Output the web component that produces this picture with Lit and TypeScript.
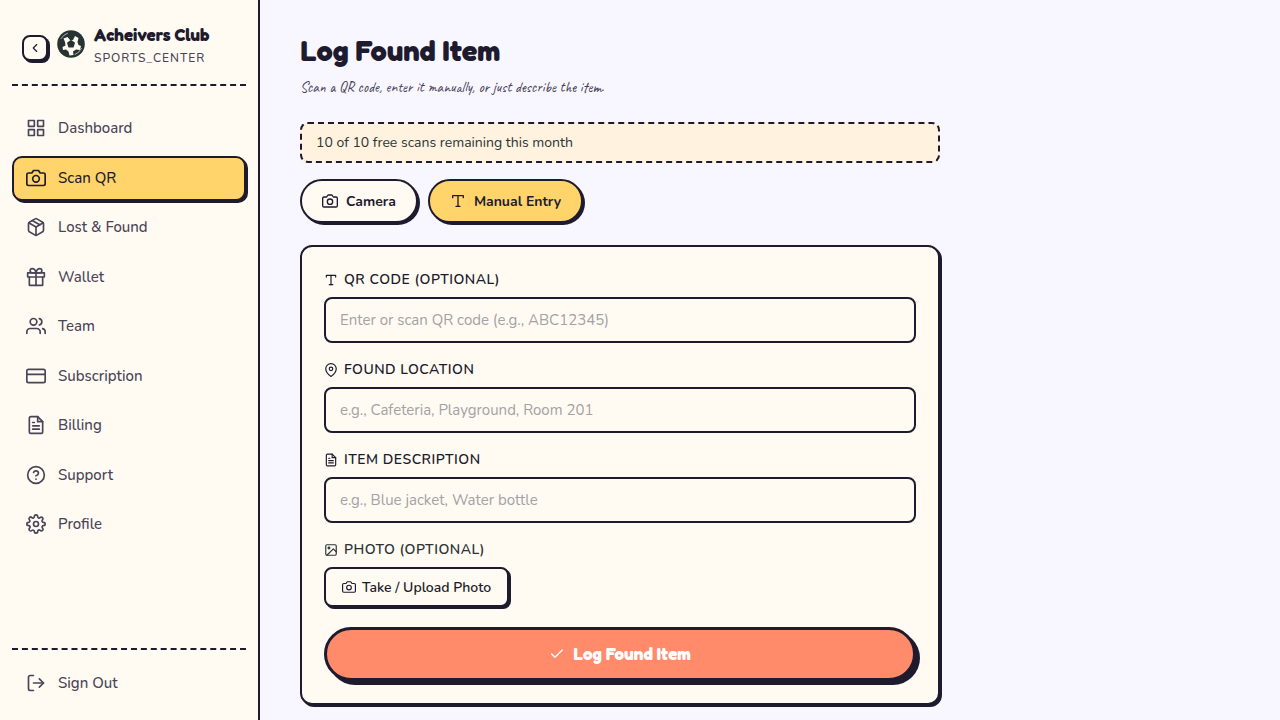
import { LitElement, html, css, svg } from "lit";
import { customElement, property, state } from "lit/decorators.js";
import { classMap } from "lit/directives/class-map.js";

const ICONS: Record<string, unknown> = {
  chevron: svg`<path d="m15 18-6-6 6-6"/>`,
  grid: svg`<rect width="7" height="7" x="3" y="3"/><rect width="7" height="7" x="14" y="3"/><rect width="7" height="7" x="14" y="14"/><rect width="7" height="7" x="3" y="14"/>`,
  camera: svg`<path d="M23 19a2 2 0 0 1-2 2H3a2 2 0 0 1-2-2V8a2 2 0 0 1 2-2h4l2-3h6l2 3h4a2 2 0 0 1 2 2z"/><circle cx="12" cy="13" r="4"/>`,
  box: svg`<path d="m16.500 9.400-9-5.190"/><path d="M21 16V8a2 2 0 0 0-1-1.730l-7-4a2 2 0 0 0-2 0l-7 4A2 2 0 0 0 3 8v8a2 2 0 0 0 1 1.730l7 4a2 2 0 0 0 2 0l7-4A2 2 0 0 0 21 16z"/><path d="M3.270 6.960 12 12.010l8.730-5.050"/><path d="M12 22.080V12"/>`,
  gift: svg`<path d="M20 12v10H4V12"/><rect x="2" y="7" width="20" height="5"/><path d="M12 22V7"/><path d="M12 7H7.500a2.500 2.500 0 0 1 0-5C11 2 12 7 12 7z"/><path d="M12 7h4.500a2.500 2.500 0 0 0 0-5C13 2 12 7 12 7z"/>`,
  users: svg`<path d="M17 21v-2a4 4 0 0 0-4-4H5a4 4 0 0 0-4 4v2"/><circle cx="9" cy="7" r="4"/><path d="M23 21v-2a4 4 0 0 0-3-3.870"/><path d="M16 3.130a4 4 0 0 1 0 7.750"/>`,
  card: svg`<rect width="22" height="16" x="1" y="4" rx="2"/><path d="M1 10h22"/>`,
  file: svg`<path d="M14 2H6a2 2 0 0 0-2 2v16a2 2 0 0 0 2 2h12a2 2 0 0 0 2-2V8z"/><path d="M14 2v6h6"/><path d="M10 9H8"/><path d="M16 13H8"/><path d="M16 17H8"/>`,
  help: svg`<circle cx="12" cy="12" r="10"/><path d="M9.090 9a3 3 0 0 1 5.830 1c0 2-3 3-3 3"/><path d="M12 17h.010"/>`,
  gear: svg`<circle cx="12" cy="12" r="3"/><path d="M19.400 15a1.650 1.650 0 0 0 .330 1.820l.060.060a2 2 0 1 1-2.830 2.830l-.060-.060a1.650 1.650 0 0 0-2.820 1.180V21a2 2 0 0 1-4 0v-.090A1.650 1.650 0 0 0 9 19.400a1.650 1.650 0 0 0-1.820.330l-.060.060a2 2 0 1 1-2.830-2.830l.060-.060A1.650 1.650 0 0 0 3.170 14H3a2 2 0 0 1 0-4h.090A1.650 1.650 0 0 0 4.600 9a1.650 1.650 0 0 0-.330-1.820l-.060-.060a2 2 0 1 1 2.830-2.830l.060.060A1.650 1.650 0 0 0 10 3.170V3a2 2 0 0 1 4 0v.090a1.650 1.650 0 0 0 2.820 1.250l.060-.060a2 2 0 1 1 2.830 2.830l-.060.060A1.650 1.650 0 0 0 20.910 10H21a2 2 0 0 1 0 4h-.090a1.650 1.650 0 0 0-1.510 1z"/>`,
  exit: svg`<path d="M9 21H5a2 2 0 0 1-2-2V5a2 2 0 0 1 2-2h4"/><path d="m16 17 5-5-5-5"/><path d="M21 12H9"/>`,
  type: svg`<path d="M4 7V4h16v3"/><path d="M9 20h6"/><path d="M12 4v16"/>`,
  pin: svg`<path d="M21 10c0 7-9 13-9 13s-9-6-9-13a9 9 0 0 1 18 0z"/><circle cx="12" cy="10" r="3"/>`,
  image: svg`<rect width="18" height="18" x="3" y="3" rx="2"/><circle cx="8.500" cy="8.500" r="1.500"/><path d="m21 15-5-5L5 21"/>`,
  check: svg`<path d="M20 6 9 17l-5-5"/>`,
};

@customElement("ui-icon")
export class UiIcon extends LitElement {
  @property() name = "";
  static styles = css`
    :host { display: inline-flex; flex: none; width: 20px; height: 20px; }
    svg { width: 100%; height: 100%; overflow: visible; fill: none; stroke: currentColor; stroke-width: 2; stroke-linecap: round; stroke-linejoin: round; }
  `;
  render() {
    return html`<svg viewBox="0 0 24 24" aria-hidden="true">${ICONS[this.name]}</svg>`;
  }
}

const NAV = [
  ["grid", "Dashboard"],
  ["camera", "Scan QR"],
  ["box", "Lost & Found"],
  ["gift", "Wallet"],
  ["users", "Team"],
  ["card", "Subscription"],
  ["file", "Billing"],
  ["help", "Support"],
  ["gear", "Profile"],
];

const FIELDS = [
  { id: "code", icon: "type", label: "QR Code (Optional)", hint: "Enter or scan QR code (e.g., ABC12345)" },
  { id: "location", icon: "pin", label: "Found Location", hint: "e.g., Cafeteria, Playground, Room 201" },
  { id: "description", icon: "file", label: "Item Description", hint: "e.g., Blue jacket, Water bottle" },
];

@customElement("app-root")
export class AppRoot extends LitElement {
  @state() mode = "manual";

  static styles = css`
    :host {
      --ink: #1e1b2e;
      --muted: #4a4458;
      --cream: #fffbf2;
      --sun: #ffd56b;
      display: grid;
      grid-template-columns: 260px minmax(0, 1fr);
      min-height: 100vh;
      background: #f8f7ff;
      color: var(--ink);
      font: 400 15px/1.5 Nunito, "Open Sans", sans-serif;
    }
    * { box-sizing: border-box; }
    button, input { font: inherit; color: inherit; margin: 0; }
    button { cursor: pointer; }
    .side {
      display: flex;
      flex-direction: column;
      padding: 23px 12px 14px;
      background: var(--cream);
      border-right: 2px solid var(--ink);
    }
    .brand {
      display: flex;
      align-items: flex-start;
      gap: 9px;
      padding: 0 10px 15px;
      border-bottom: 2px dashed var(--ink);
    }
    .collapse {
      display: grid;
      place-items: center;
      width: 26px;
      height: 26px;
      margin-top: 12px;
      padding: 0;
      background: var(--cream);
      border: 2px solid var(--ink);
      border-radius: 8px;
      box-shadow: 2px 2px 0 var(--ink);
    }
    .collapse ui-icon { width: 14px; height: 14px; }
    .ball { width: 28px; height: 28px; margin-top: 7px; flex: none; }
    .names { min-width: 0; }
    .club {
      font: 700 17px/24px "Fredoka One", Fredoka, Lato, sans-serif;
      white-space: nowrap;
    }
    .kind { font-size: 12px; line-height: 22px; letter-spacing: 1px; font-weight: 500; color: var(--muted); }
    .nav { display: flex; flex-direction: column; gap: 4px; margin-top: 20px; flex: 1; }
    .link {
      display: flex;
      align-items: center;
      gap: 12px;
      padding: 9px 12px 10px;
      border: 2px solid transparent;
      border-radius: 10px;
      color: var(--muted);
      font-size: 15px;
      line-height: 1.5;
      font-weight: 500;
      text-decoration: none;
    }
    .link.active { background: var(--sun); border-color: var(--ink); box-shadow: 2px 2px 0 var(--ink); color: var(--ink); }
    .foot { border-top: 2px dashed var(--ink); padding-top: 11px; display: grid; }
    .signout { background: none; text-align: left; }
    .main { padding: 32px 40px 14px; }
    .col { max-width: 640px; }
    h1 { margin: 0; font: 700 29px/38px "Fredoka One", Fredoka, Lato, sans-serif; }
    .lead { margin: 6px 0 0; font: 500 15px/24px Caveat, "Liberation Serif", cursive; color: var(--muted); }
    .quota {
      margin: 22px 0 16px;
      padding: 8px 14px;
      border: 2px dashed var(--ink);
      border-radius: 8px;
      background: #fff3df;
      font-size: 14px;
      line-height: 21px;
      color: #2d3436;
    }
    .tabs { display: flex; gap: 10px; margin-bottom: 22px; }
    .tab {
      display: flex;
      align-items: center;
      gap: 8px;
      height: 44px;
      padding: 0 20px;
      border: 2px solid var(--ink);
      border-radius: 22px;
      background: var(--cream);
      box-shadow: 2px 2px 0 var(--ink);
      font-size: 14px;
      font-weight: 700;
    }
    .tab.on { background: var(--sun); }
    .tab ui-icon { width: 16px; height: 16px; }
    .card {
      display: flex;
      flex-direction: column;
      gap: 16px;
      padding: 22px;
      border: 2px solid var(--ink);
      border-radius: 12px;
      background: var(--cream);
      box-shadow: 2px 2px 0 var(--ink);
    }
    .field { display: grid; gap: 6px; justify-items: start; }
    .label {
      display: flex;
      align-items: center;
      gap: 6px;
      font-size: 14px;
      line-height: 22px;
      font-weight: 650;
      letter-spacing: 0.5px;
      text-transform: uppercase;
    }
    .label.soft { color: #2d3436; }
    .label ui-icon, .upload ui-icon { width: 14px; height: 14px; }
    .input {
      width: 100%;
      height: 46px;
      padding: 0 14px;
      border: 2px solid var(--ink);
      border-radius: 8px;
      background: var(--cream);
      font-size: 15px;
    }
    .input::placeholder { color: #a5a1a5; opacity: 1; }
    .upload {
      display: flex;
      align-items: center;
      gap: 6px;
      height: 40px;
      padding: 0 16px;
      border: 2px solid var(--ink);
      border-radius: 8px;
      background: var(--cream);
      box-shadow: 2px 2px 0 var(--ink);
      font-size: 14px;
      font-weight: 650;
    }
    .submit {
      display: flex;
      align-items: center;
      justify-content: center;
      gap: 8px;
      height: 54px;
      margin-top: 4px;
      border: 3px solid var(--ink);
      border-radius: 27px;
      background: #ff8b6a;
      box-shadow: 4px 4px 0 var(--ink);
      color: #fff;
      font: 700 17px/24px "Fredoka One", Fredoka, Lato, sans-serif;
    }
    .submit ui-icon { width: 16px; height: 16px; }
  `;

  renderTab(id: string, icon: string, text: string) {
    return html`<button type="button" class=${classMap({ tab: true, on: this.mode === id })}
      aria-pressed=${this.mode === id} @click=${() => (this.mode = id)}><ui-icon name=${icon}></ui-icon>${text}</button>`;
  }

  render() {
    return html`
      <aside class="side">
        <header class="brand">
          <button class="collapse" aria-label="Collapse sidebar"><ui-icon name="chevron"></ui-icon></button>
          <svg class="ball" viewBox="0 0 28 28" aria-hidden="true">
            <circle cx="14" cy="14" r="13.8" fill="#263332"/>
            <path fill="#fffbf2" d="M6.500 8.500l4-1.500 2.500 3h3l2-4 3.500 2-1 4 1 3 2.500 1-1 4-4-.500-3 2 .500 3.500-4 .500-1-4-2.500-2-3 .500-.500-3 3-1.500-.500-3.500z"/>
            <path fill="#263332" d="M14 9.800l4 3-1.500 4.700h-5l-1.500-4.700z"/>
            <path fill="none" stroke="#b9bfba" stroke-width="0.900" stroke-linecap="round" d="M4 8.500a12 12 0 0 1 6.500-5.200M24.500 18.500a12 12 0 0 1-6.500 6"/>
          </svg>
          <div class="names">
            <div class="club">Acheivers Club</div>
            <div class="kind">SPORTS_CENTER</div>
          </div>
        </header>
        <nav class="nav">
          ${NAV.map(([icon, text]) => html`<a href="#" class=${classMap({ link: true, active: text === "Scan QR" })}><ui-icon name=${icon}></ui-icon>${text}</a>`)}
        </nav>
        <div class="foot">
          <button class="link signout"><ui-icon name="exit"></ui-icon>Sign Out</button>
        </div>
      </aside>
      <main class="main">
        <div class="col">
          <h1>Log Found Item</h1>
          <p class="lead">Scan a QR code, enter it manually, or just describe the item.</p>
          <div class="quota">10 of 10 free scans remaining this month</div>
          <div class="tabs">
            ${this.renderTab("camera", "camera", "Camera")}
            ${this.renderTab("manual", "type", "Manual Entry")}
          </div>
          <form class="card" @submit=${(e: Event) => e.preventDefault()}>
            ${FIELDS.map((f) => html`<div class="field">
              <label class="label" for=${f.id}><ui-icon name=${f.icon}></ui-icon>${f.label}</label>
              <input class="input" type="text" id=${f.id} placeholder=${f.hint} />
            </div>`)}
            <div class="field">
              <span class="label soft" id="photo"><ui-icon name="image"></ui-icon>Photo (Optional)</span>
              <button type="button" class="upload"><ui-icon name="camera"></ui-icon>Take / Upload Photo</button>
            </div>
            <button class="submit"><ui-icon name="check"></ui-icon>Log Found Item</button>
          </form>
        </div>
      </main>
    `;
  }
}
